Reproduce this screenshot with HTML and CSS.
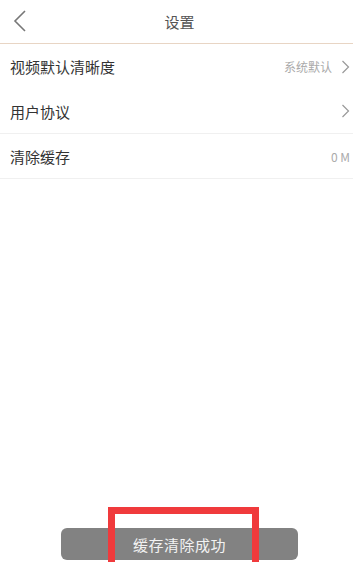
FILE: index.html
```html
<!DOCTYPE html>
<html lang="zh">
<head>
<meta charset="utf-8">
<link rel="stylesheet" href="styles.css">
</head>
<body>
<div class="page">
  <header class="topbar">
    <svg class="back" width="14" height="22" viewBox="0 0 14 22"><path d="M12 1 L2 11 L12 21" fill="none" stroke="#777" stroke-width="1.6"/></svg>
    <div class="title">设置</div>
  </header>
  <div class="list">
    <div class="row">
      <span class="label">视频默认清晰度</span>
      <span class="right"><span class="value">系统默认</span><svg class="chev" width="9" height="14" viewBox="0 0 9 14"><path d="M1.5 1 L7.5 7 L1.5 13" fill="none" stroke="#999" stroke-width="1.2"/></svg></span>
    </div>
    <div class="row line">
      <span class="label">用户协议</span>
      <span class="right"><svg class="chev" width="9" height="14" viewBox="0 0 9 14"><path d="M1.5 1 L7.5 7 L1.5 13" fill="none" stroke="#999" stroke-width="1.2"/></svg></span>
    </div>
    <div class="row line">
      <span class="label">清除缓存</span>
      <span class="right"><span class="value">0 M</span></span>
    </div>
  </div>
  <div class="toast">缓存清除成功</div>
  <div class="mark"></div>
</div>
</body>
</html>
```
FILE: styles.css
```css
html, body {
  margin: 0;
  padding: 0;
  background: #fff;
}
body {
  font-family: "Noto Sans CJK SC", "Noto Sans", sans-serif;
  width: 353px;
  height: 562px;
  overflow: hidden;
}
.page {
  position: relative;
  width: 353px;
  height: 562px;
}
.topbar {
  height: 43px;
  border-bottom: 1px solid #e8d5c4;
  display: flex;
  align-items: center;
  justify-content: center;
  position: relative;
}
.back {
  position: absolute;
  left: 13px;
  top: 10px;
}
.title {
  font-size: 15px;
  color: #555;
  margin-left: 6px;
  line-height: 20px;
}
.list {
  display: flex;
  flex-direction: column;
}
.row {
  height: 45px;
  display: flex;
  align-items: center;
  justify-content: space-between;
  padding: 0 3px 0 10px;
  box-sizing: border-box;
}
.row.line {
  border-bottom: 1px solid #f0f0f0;
}
.label {
  font-size: 15px;
  color: #333;
}
.right {
  display: flex;
  align-items: center;
  gap: 9px;
}
.value {
  font-size: 12px;
  color: #aaa;
}
.chev {
  display: block;
}
.toast {
  position: absolute;
  left: 61px;
  top: 528px;
  width: 237px;
  height: 32px;
  border-radius: 6px;
  background: #828282;
  color: #f2f2f2;
  font-size: 15px;
  display: flex;
  align-items: center;
  justify-content: center;
  letter-spacing: 0.5px;
}
.mark {
  position: absolute;
  left: 108px;
  top: 507px;
  width: 137px;
  height: 70px;
  border: 7px solid #f03a3c;
  border-bottom: none;
}
```
